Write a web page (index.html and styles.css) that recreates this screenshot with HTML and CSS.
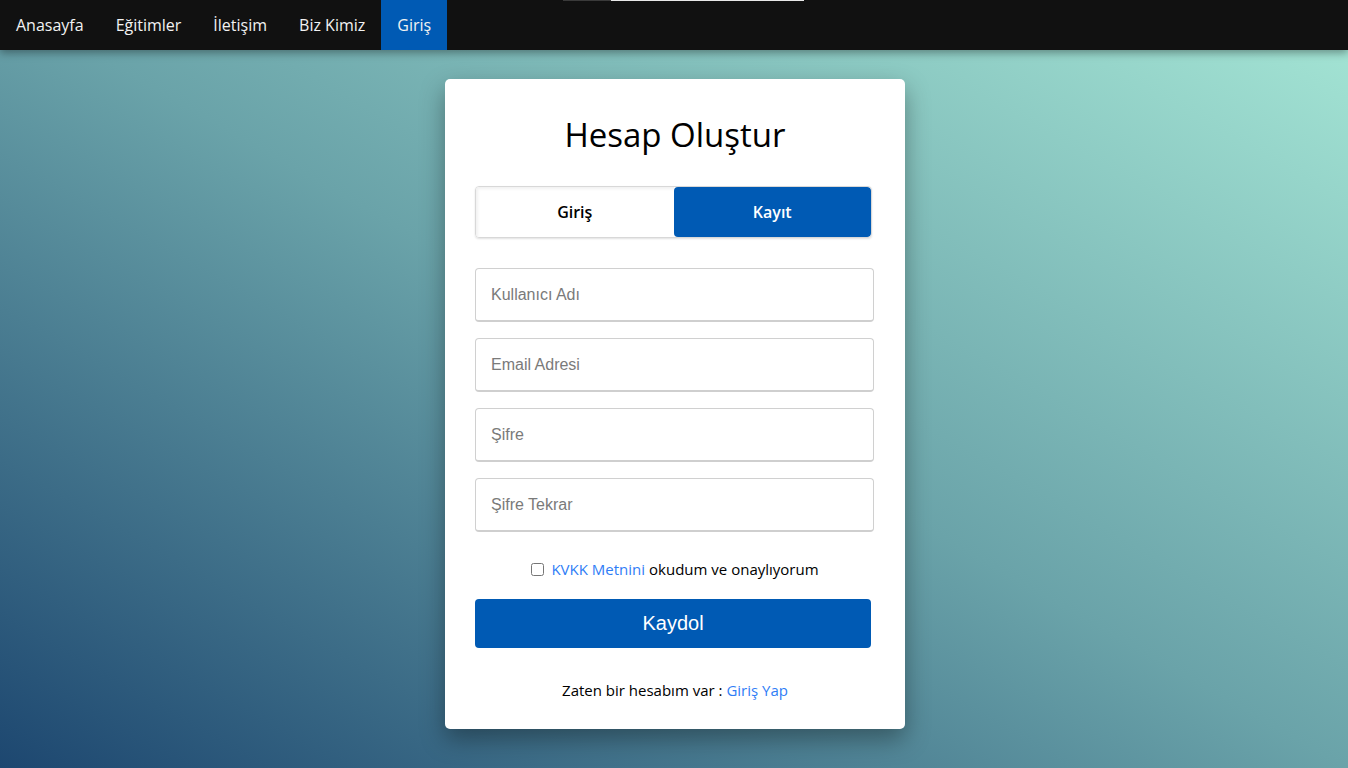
FILE: index.html
```html
<!DOCTYPE html>
<html lang="tr">
<head>
<meta charset="utf-8">
<title>Hesap Oluştur</title>
<link rel="stylesheet" href="styles.css">
</head>
<body>
<div class="topline"><span class="tl-dark"></span><span class="tl-light"></span></div>
<nav class="navbar">
  <a href="#" class="nav-link">Anasayfa</a>
  <a href="#" class="nav-link">Eğitimler</a>
  <a href="#" class="nav-link">İletişim</a>
  <a href="#" class="nav-link">Biz Kimiz</a>
  <a href="#" class="nav-link active">Giriş</a>
</nav>
<main class="page">
  <div class="card">
    <h1 class="title">Hesap Oluştur</h1>
    <div class="toggle">
      <button class="tab">Giriş</button>
      <button class="tab tab-active">Kayıt</button>
    </div>
    <form class="form">
      <input class="field" type="text" placeholder="Kullanıcı Adı">
      <input class="field" type="email" placeholder="Email Adresi">
      <input class="field" type="password" placeholder="Şifre">
      <input class="field" type="password" placeholder="Şifre Tekrar">
      <label class="consent"><input type="checkbox" class="check"> <a href="#" class="link">KVKK Metnini</a> okudum ve onaylıyorum</label>
      <button type="button" class="submit">Kaydol</button>
    </form>
    <p class="footer-text">Zaten bir hesabım var : <a href="#" class="link">Giriş Yap</a></p>
  </div>
</main>
</body>
</html>
```
FILE: styles.css
```css
* { box-sizing: border-box; }
html, body { margin: 0; padding: 0; height: 100%; }
body {
  font-family: "Open Sans", "Noto Sans", sans-serif;
  background: linear-gradient(to top right, #1d4770 0%, #6aa3a9 50%, #a6e7d6 100%);
  min-height: 768px;
  overflow: hidden;
}
.topline {
  position: absolute;
  top: 0;
  left: 563px;
  display: flex;
  height: 1px;
  z-index: 5;
}
.tl-dark { width: 48px; background: #3a3a3a; }
.tl-light { width: 193px; background: #e8e8e8; }
.navbar {
  display: flex;
  height: 50px;
  background: #111111;
  box-shadow: 0 3px 8px rgba(0,0,0,0.35);
  position: relative;
  z-index: 2;
}
.nav-link {
  display: flex;
  align-items: center;
  padding: 0 16px;
  color: #f2f2f2;
  text-decoration: none;
  font-size: 16px;
}
.nav-link.active { background: #005ab4; }
.page {
  display: flex;
  justify-content: center;
  padding-top: 29px;
  padding-left: 2px;
}
.card {
  width: 460px;
  min-height: 650px;
  background: #fff;
  border-radius: 5px;
  padding: 30px 30px 29px;
  box-shadow: 0 10px 25px rgba(0,0,0,0.35);
  display: flex;
  flex-direction: column;
}
.card > * { flex-shrink: 0; }
.title {
  margin: 0 0 2px;
  text-align: center;
  font-size: 33px;
  font-weight: 500;
  color: #000;
  line-height: 52px;
}
.toggle {
  display: flex;
  width: 397px;
  height: 52px;
  margin-top: 23px;
  border-radius: 4px;
  border: 1px solid #d8d8d8;
  box-shadow: 0 1px 2px rgba(0,0,0,0.12);
  overflow: hidden;
}
.tab {
  flex: 1;
  border: 0;
  background: #fff;
  font-family: inherit;
  font-size: 16px;
  font-weight: 600;
  color: #000;
  box-shadow: inset 2px 2px 3px rgba(0,0,0,0.06);
}
.tab-active {
  background: #005ab4;
  color: #fff;
  box-shadow: none;
  border-radius: 4px;
}
.form {
  display: flex;
  flex-direction: column;
  gap: 16px;
  margin-top: 30px;
}
.form > * { flex-shrink: 0; }
.field {
  height: 54px;
  width: 399px;
  border: 1px solid #d0d0d0;
  border-bottom: 2px solid #cfcfcf;
  border-radius: 4px;
  padding: 0 15px;
  font-family: "Liberation Sans", Arial, sans-serif;
  font-size: 16px;
  color: #333;
  outline: none;
}
.field::placeholder { color: #7a7a7a; }
.consent {
  display: flex;
  align-items: center;
  justify-content: center;
  font-size: 15px;
  color: #000;
  margin-top: 11px;
  gap: 4px;
}
.check { margin: 0 3px 0 0; width: 13px; height: 13px; }
.link { color: #2f7df6; text-decoration: none; }
.submit {
  margin-top: 4px;
  width: 396px;
  height: 49px;
  border: 0;
  border-radius: 4px;
  background: #005ab4;
  color: #fff;
  font-family: "Liberation Sans", Arial, sans-serif;
  font-size: 20px;
}
.footer-text {
  text-align: center;
  margin: 32px 0 0;
  font-size: 15px;
  line-height: 20px;
  color: #000;
}
```
